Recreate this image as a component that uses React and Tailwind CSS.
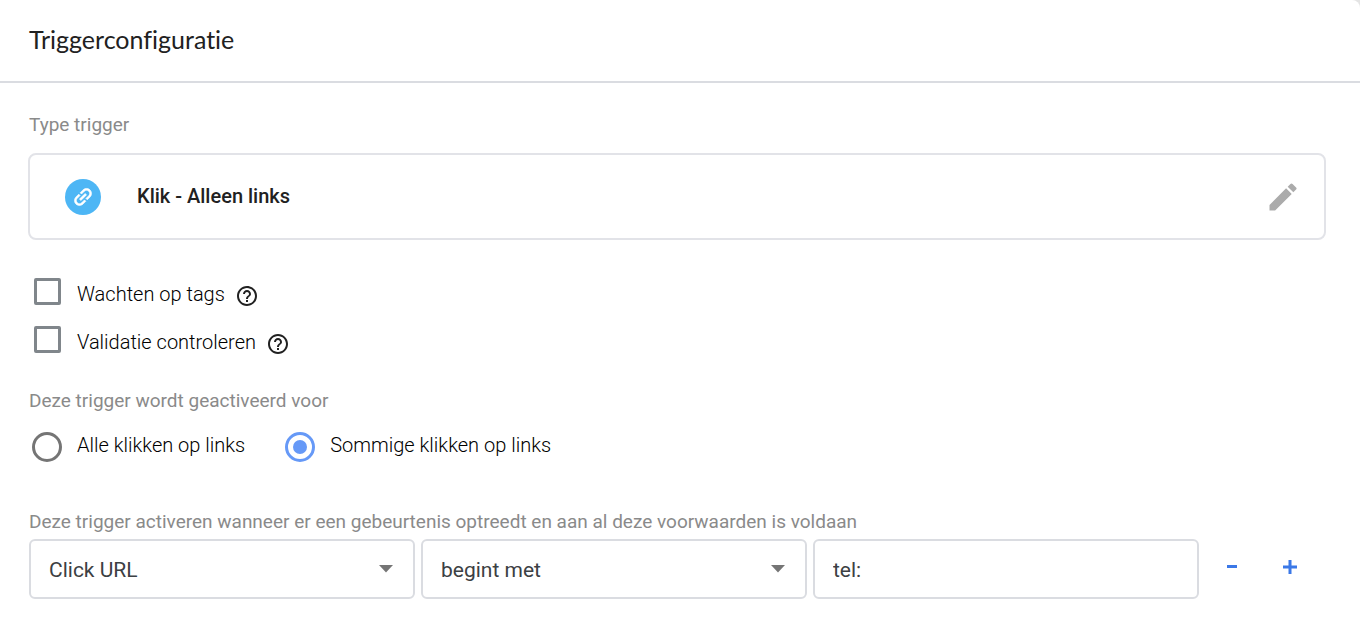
import React, { useState } from 'react';
import { MdEdit, MdHelpOutline } from 'react-icons/md';

const options = [
  { id: 'wait', label: 'Wachten op tags' },
  { id: 'validate', label: 'Validatie controleren' },
];

const scopes = [
  { id: 'all', label: 'Alle klikken op links' },
  { id: 'some', label: 'Sommige klikken op links' },
];

const LinkIcon = () => (
  <svg viewBox="0 0 24 24" className="size-6" fill="#fff" stroke="#fff" strokeWidth="0.6" aria-hidden="true">
    <g transform="rotate(-45 12 12)">
      <path d="M3.9 12c0-1.71 1.39-3.1 3.1-3.1h4V7H7c-2.76 0-5 2.24-5 5s2.24 5 5 5h4v-1.9H7c-1.71 0-3.1-1.39-3.1-3.1zM8 13h8v-2H8v2zm9-6h-4v1.9h4c1.71 0 3.1 1.39 3.1 3.1s-1.39 3.1-3.1 3.1h-4V17h4c2.76 0 5-2.24 5-5s-2.24-5-5-5z" />
    </g>
  </svg>
);

const Select = ({ label, choices }) => (
  <div className="relative">
    <select
      aria-label={label}
      className="h-15 w-full appearance-none rounded-md border-2 border-[#dadce1] bg-white pt-1 pr-12 pl-[18px] text-[21px] text-[#3c4043]"
    >
      {choices.map((choice) => (
        <option key={choice}>{choice}</option>
      ))}
    </select>
    <svg viewBox="0 0 14 8" className="pointer-events-none absolute top-[26px] right-[22px] h-2 w-3.5" fill="#757575" aria-hidden="true">
      <path d="M0 0h14L7 7.5z" />
    </svg>
  </div>
);

const App = () => {
  const [scope, setScope] = useState('some');

  return (
    <div className="min-h-screen bg-[#e4e4e4] font-['Roboto',sans-serif] text-[#212121]">
      <main className="min-h-screen rounded-tr-lg bg-white">
        <header className="border-b-2 border-[#dadce1] px-[29px] pt-[23px] pb-[26px]">
          <h1 className="font-['Lato',sans-serif] text-[25px] leading-8 [font-variant-ligatures:none]">Triggerconfiguratie</h1>
        </header>

        <div className="pt-[30px] pr-[34px] pb-5 pl-7">
          <h2 className="pl-px text-[19px] leading-6 text-[#8a8a8a]">Type trigger</h2>
          <section className="mt-4 flex h-[87px] items-center rounded-lg border-2 border-[#e2e3e8] pr-[23px] pl-[35px]">
            <span className="flex size-9 items-center justify-center rounded-full bg-[#4db6f5]">
              <LinkIcon />
            </span>
            <span className="ml-9 flex-1 pb-0.5 text-xl font-medium">Klik - Alleen links</span>
            <button type="button" aria-label="Bewerken" className="text-[#ababab]">
              <MdEdit className="size-9" />
            </button>
          </section>

          <div className="mt-[30px]">
            {options.map((option) => (
              <div key={option.id} className="flex h-12 items-center pl-1.5">
                <input
                  id={option.id}
                  type="checkbox"
                  className="mb-1.5 size-[27px] appearance-none rounded-xs border-3 border-[#80868b] checked:bg-[#80868b]"
                />
                <label htmlFor={option.id} className="pl-4 text-xl font-light text-black">{option.label}</label>
                <button type="button" aria-label={`Hulp: ${option.label}`} className="ml-2.5 pt-1">
                  <MdHelpOutline className="size-6" />
                </button>
              </div>
            ))}
          </div>

          <fieldset className="mt-[23px]">
            <legend className="pl-px text-[19px] leading-6 text-[#8a8a8a]">Deze trigger wordt geactiveerd voor</legend>
            <div className="mt-[18px] flex gap-10 pl-1">
              {scopes.map((item) => (
                <div key={item.id} className="flex items-center">
                  <input
                    id={item.id}
                    type="radio"
                    name="scope"
                    checked={scope === item.id}
                    onChange={() => setScope(item.id)}
                    className="size-[30px] appearance-none rounded-full border-3 border-[#757575] bg-clip-content p-[5px] checked:border-[#6699f7] checked:bg-[#6699f7]"
                  />
                  <label htmlFor={item.id} className="pb-1 pl-[15px] text-xl font-light text-black">{item.label}</label>
                </div>
              ))}
            </div>
          </fieldset>

          <h2 className="mt-[47px] pl-px text-[19px] leading-6 text-[#8a8a8a]">
            Deze trigger activeren wanneer er een gebeurtenis optreedt en aan al deze voorwaarden is voldaan
          </h2>
          <div className="mt-[5px] flex gap-1 pl-px">
            <div className="grid flex-1 grid-cols-3 gap-1.5">
              <Select label="Variabele" choices={['Click URL', 'Click Text', 'Click ID']} />
              <Select label="Operator" choices={['begint met', 'bevat', 'is gelijk aan']} />
              <input
                type="text"
                aria-label="Waarde"
                defaultValue="tel:"
                className="h-15 w-full rounded-md border-2 border-[#dadce1] px-[18px] pt-0.5 text-[21px] text-[#3c4043]"
              />
            </div>
            <div className="flex w-[123px] text-[#3b78e7]">
              <button type="button" aria-label="Voorwaarde verwijderen" className="flex h-14 w-[58px] items-center justify-center">
                <svg viewBox="0 0 14 14" className="size-3.5" fill="currentColor" aria-hidden="true">
                  <path d="M2 5h10v3H2z" />
                </svg>
              </button>
              <button type="button" aria-label="Voorwaarde toevoegen" className="flex h-14 w-[58px] items-center justify-center">
                <svg viewBox="0 0 14 14" className="size-3.5" fill="currentColor" aria-hidden="true">
                  <path d="M5.5 0h3v5.5H14v3H8.5V14h-3V8.5H0v-3h5.5z" />
                </svg>
              </button>
            </div>
          </div>
        </div>
      </main>
    </div>
  );
};

export default App;
